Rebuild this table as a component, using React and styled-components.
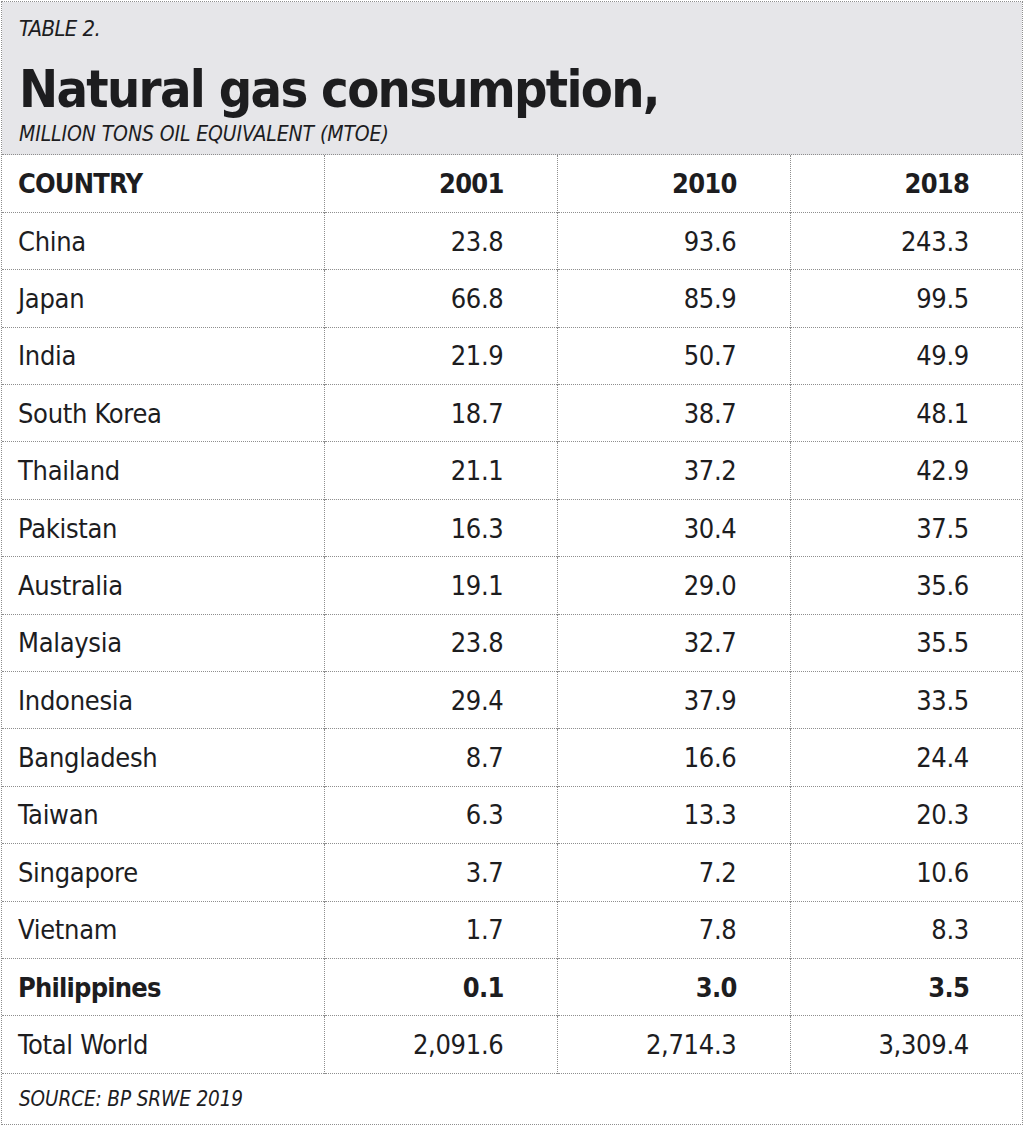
import styled, { createGlobalStyle } from "styled-components";

const GlobalStyle = createGlobalStyle`
  html, body {
    margin: 0;
    padding: 0;
    background: #ffffff;
  }
  body {
    font-family: "DejaVu Sans Condensed", "Liberation Sans", sans-serif;
    color: #1d1d1f;
  }
`;

const rows = [
  ["China", "23.8", "93.6", "243.3"],
  ["Japan", "66.8", "85.9", "99.5"],
  ["India", "21.9", "50.7", "49.9"],
  ["South Korea", "18.7", "38.7", "48.1"],
  ["Thailand", "21.1", "37.2", "42.9"],
  ["Pakistan", "16.3", "30.4", "37.5"],
  ["Australia", "19.1", "29.0", "35.6"],
  ["Malaysia", "23.8", "32.7", "35.5"],
  ["Indonesia", "29.4", "37.9", "33.5"],
  ["Bangladesh", "8.7", "16.6", "24.4"],
  ["Taiwan", "6.3", "13.3", "20.3"],
  ["Singapore", "3.7", "7.2", "10.6"],
  ["Vietnam", "1.7", "7.8", "8.3"],
  ["Philippines", "0.1", "3.0", "3.5", true],
  ["Total World", "2,091.6", "2,714.3", "3,309.4"],
];

const Frame = styled.div`
  width: 1020px;
  height: 1122px;
  margin: 1px 0 0 1px;
  border: 1px dotted #8e8e8e;
  display: flex;
  flex-direction: column;
`;

const Header = styled.header`
  background: #e6e6e9;
  height: 153px;
  box-sizing: border-box;
  padding: 14px 0 0 17px;
  border-bottom: 1px dotted #8e8e8e;
`;

const Kicker = styled.div`
  font-style: italic;
  font-size: 22px;
  line-height: 26px;
  letter-spacing: -0.6px;
`;

const Title = styled.h1`
  margin: 17px 0 0;
  font-weight: 700;
  font-size: 52px;
  line-height: 60px;
  letter-spacing: -1.7px;
`;

const Subtitle = styled.div`
  font-style: italic;
  font-size: 21px;
  line-height: 24px;
  margin-top: 3px;
  letter-spacing: -0.1px;
`;

const Table = styled.table`
  width: 100%;
  border-collapse: collapse;
  table-layout: fixed;
`;

const Row = styled.tr`
  height: 57.4px;
  border-bottom: 1px dotted #8e8e8e;
  font-weight: ${(p) => (p.$bold ? 700 : 400)};
  letter-spacing: ${(p) => (p.$bold ? "-0.8px" : "-0.3px")};
`;

const Cell = styled.td`
  font-size: 27px;
  padding: 0 ${(p) => (p.$first ? "0 0 16px" : "53px 0 0")};
  text-align: ${(p) => (p.$first ? "left" : "right")};
  border-left: ${(p) => (p.$first ? "none" : "1px dotted #8e8e8e")};
  vertical-align: middle;
`;

const HeadCell = styled(Cell).attrs({ as: "th" })`
  font-weight: 700;
  letter-spacing: -0.8px;
`;

const Source = styled.div`
  flex: 1;
  display: flex;
  align-items: center;
  padding-left: 17px;
  font-style: italic;
  font-size: 20.5px;
  letter-spacing: -0.1px;
`;

export default function App() {
  return (
    <>
      <GlobalStyle />
      <Frame>
        <Header>
          <Kicker>TABLE 2.</Kicker>
          <Title>Natural gas consumption,</Title>
          <Subtitle>MILLION TONS OIL EQUIVALENT (MTOE)</Subtitle>
        </Header>
        <Table>
          <colgroup>
            <col style={{ width: 322 }} />
            <col style={{ width: 233 }} />
            <col style={{ width: 233 }} />
            <col />
          </colgroup>
          <thead>
            <Row>
              <HeadCell $first>COUNTRY</HeadCell>
              <HeadCell>2001</HeadCell>
              <HeadCell>2010</HeadCell>
              <HeadCell>2018</HeadCell>
            </Row>
          </thead>
          <tbody>
            {rows.map(([name, a, b, c, bold]) => (
              <Row key={name} $bold={bold}>
                <Cell $first>{name}</Cell>
                <Cell>{a}</Cell>
                <Cell>{b}</Cell>
                <Cell>{c}</Cell>
              </Row>
            ))}
          </tbody>
        </Table>
        <Source>SOURCE: BP SRWE 2019</Source>
      </Frame>
    </>
  );
}
